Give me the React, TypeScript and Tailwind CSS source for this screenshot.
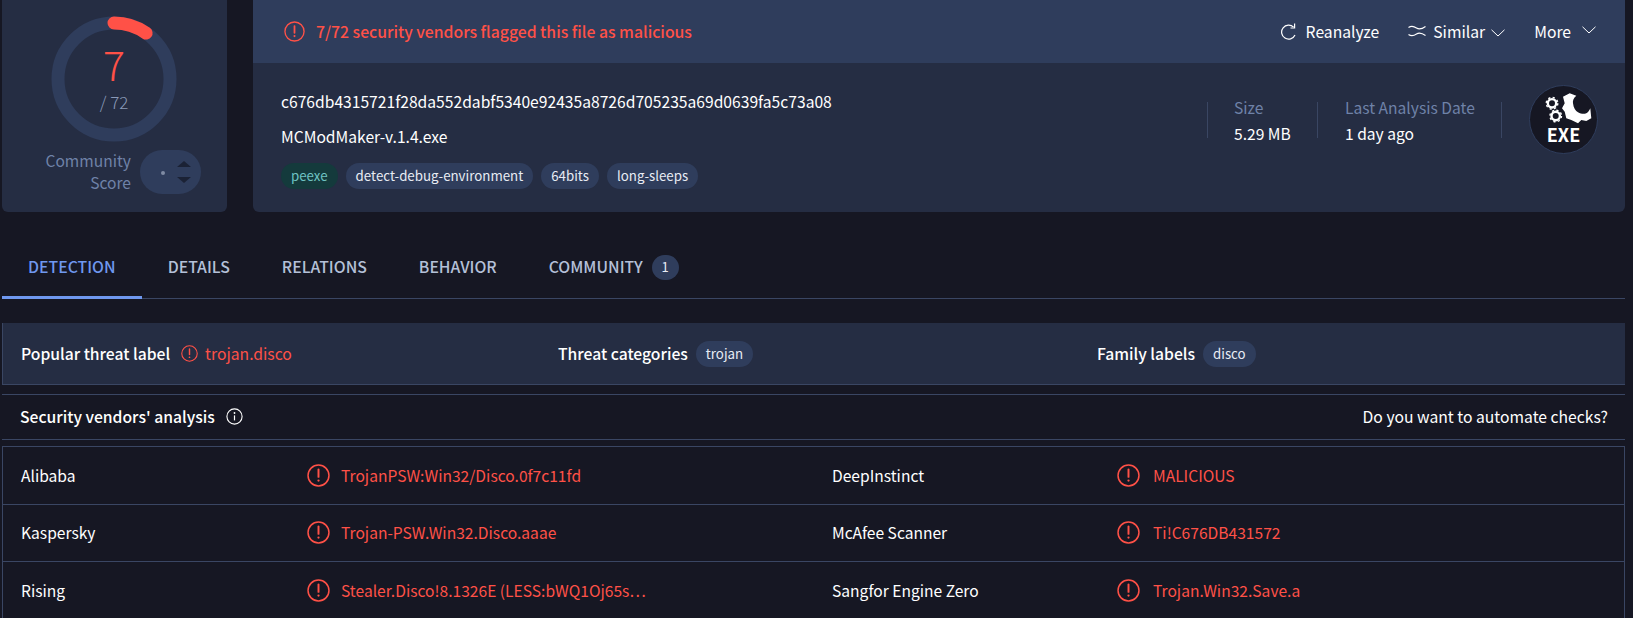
import React from 'react';

const AlertIcon = ({ size = 20, className = '' }: { size?: number; className?: string }) => (
  <svg width={size} height={size} viewBox="0 0 20 20" fill="none" className={`shrink-0 ${className}`}>
    <circle cx="10" cy="10" r="9.1" stroke="#ff5147" strokeWidth="1.3" />
    <path d="M10 4.8v6.4" stroke="#ff5147" strokeWidth="1.7" strokeLinecap="round" />
    <circle cx="10" cy="14.4" r="1" fill="#ff5147" />
  </svg>
);

const InfoIcon = () => (
  <svg width="17" height="17" viewBox="0 0 17 17" fill="none">
    <circle cx="8.5" cy="8.5" r="7.6" stroke="#fff" strokeWidth="1.1" />
    <circle cx="8.5" cy="5" r="0.9" fill="#fff" />
    <path d="M8.5 7.4v5" stroke="#fff" strokeWidth="1.2" />
  </svg>
);

const ReloadIcon = () => (
  <svg width="16" height="17" viewBox="0 0 16 17" fill="none" stroke="#fff" strokeWidth="1.2">
    <path d="M12.6 4.200A7 7 0 1 0 14 12" />
    <path d="M13.600 0.500V5H9.500" />
  </svg>
);

const WaveIcon = () => (
  <svg width="18" height="12" viewBox="0 0 18 12" fill="none" stroke="#fff" strokeWidth="1.1" className="shrink-0">
    <path d="M0.500 2.500C3 0.800 6 1.300 8.500 3C11 4.700 14 4 17.500 1.500" />
    <path d="M0.500 9.500C3 11.200 6 10.700 8.500 9C11 7.300 14 8 17.500 10.500" />
  </svg>
);

const Chevron = ({ className = '' }: { className?: string }) => (
  <svg width="14" height="8" viewBox="0 0 14 8" fill="none" stroke="#fff" strokeWidth="1" className={`shrink-0 ${className}`}>
    <path d="M0.500 0.800L7 7L13.500 0.800" />
  </svg>
);

const ScoreRing = () => (
  <svg width="126" height="126" viewBox="0 0 126 126" fill="none" className="absolute inset-0">
    <circle cx="63" cy="63" r="56" stroke="#2f3d5c" strokeWidth="13" />
    <path d="M 63 7 A 56 56 0 0 1 95.100 17.100" stroke="#ff5147" strokeWidth="13" strokeLinecap="round" />
  </svg>
);

const SmallGear = ({ cx, cy }: { cx: number; cy: number }) => (
  <>
    <circle cx={cx} cy={cy} r="4.200" stroke="#fff" strokeWidth="2.400" />
    <circle cx={cx} cy={cy} r="5.800" stroke="#fff" strokeWidth="1.400" strokeDasharray="2.200 2.350" />
  </>
);

const ExeBadge = () => (
  <div className="flex flex-col items-center w-[69px] h-[69px] rounded-full bg-[#161723] border border-[#2f3d5c] ml-[27px]">
    <svg width="67" height="39" viewBox="1 1 67 39" fill="none" className="shrink-0">
      <SmallGear cx={23} cy={18.3} />
      <SmallGear cx={26.7} cy={31} />
      <path
        d="M34 11.700L40.700 8.300L47.300 10.700C44.500 13 43.500 16 44 18.300C44.500 23 46.500 26 49 27.300C52 29 55 29.300 57.300 28.300C59 27.500 60.500 25.500 61.300 23.300L62.300 33.300L57.300 36L52.300 35L49 38.300L42.300 35L37.300 33.300L35.700 26.700L33 23.300L35.700 18.300Z"
        fill="#fff"
      />
    </svg>
    <span className="text-[18px] leading-[18px] font-bold text-white">EXE</span>
  </div>
);

const Tag = ({ children, green }: { children: React.ReactNode; green?: boolean }) => (
  <span
    className={`inline-flex items-center h-[26px] px-[10px] rounded-full text-[13.3px] leading-none ${
      green ? 'bg-[#143a3c] text-[#6fc3c3]' : 'bg-[#2f3d5c] text-[#e8ecf4]'
    }`}
  >
    {children}
  </span>
);

const Stat = ({ label, value, className }: { label: string; value: string; className: string }) => (
  <div className={`flex flex-col gap-[4px] h-[36px] border-l border-[#3a4663] ${className}`}>
    <span className="text-[15.6px] leading-[20px] -mt-[5px] text-[#6f82a8]">{label}</span>
    <span className="text-[15.6px] leading-[24px] text-white">{value}</span>
  </div>
);

const tabs = [
  { name: 'DETECTION', active: true },
  { name: 'DETAILS' },
  { name: 'RELATIONS' },
  { name: 'BEHAVIOR' },
  { name: 'COMMUNITY', badge: '1' },
];

const rows = [
  ['Alibaba', 'TrojanPSW:Win32/Disco.0f7c11fd', 'DeepInstinct', 'MALICIOUS'],
  ['Kaspersky', 'Trojan-PSW.Win32.Disco.aaae', 'McAfee Scanner', 'Ti!C676DB431572'],
  ['Rising', 'Stealer.Disco!8.1326E (LESS:bWQ1Oj65s…', 'Sangfor Engine Zero', 'Trojan.Win32.Save.a'],
];

const Verdict = ({ name, result, nameWidth, gap }: { name: string; result: string; nameWidth: string; gap: string }) => (
  <div className="flex items-center">
    <span className={`${nameWidth} text-[15.6px] text-white`}>{name}</span>
    <AlertIcon size={23} />
    <span className={`${gap} text-[15.6px] text-[#ff5147] whitespace-nowrap`}>{result}</span>
  </div>
);

export default function App() {
  return (
    <div className="w-[1633px] h-[618px] overflow-hidden bg-[#161723] pl-[2px] pr-[8px] font-['Noto_Sans_CJK_JP','Noto_Sans',sans-serif]">
      <div className="flex gap-[26px] h-[212px]">
        <div className="w-[225px] shrink-0 rounded-b-[6px] bg-[#252d43] flex flex-col items-center">
          <div className="relative w-[126px] h-[126px] mt-[16px] -ml-[1px] flex flex-col items-center">
            <ScoreRing />
            <span className="relative mt-[23px] text-[41px] leading-[48px] font-light text-[#ff5147]">7</span>
            <span className="relative mt-[5px] text-[17px] leading-[20px] font-light text-[#8a9ab8]">/ 72</span>
          </div>
          <div className="flex items-center mt-[8px] self-start">
            <div className="w-[129px] -mt-[2px] text-right text-[15.6px] leading-[22px] text-[#6f82a8]">
              Community
              <br />
              Score
            </div>
            <div className="relative ml-[9px] w-[61px] h-[44px] rounded-full bg-[#2f3d5c]">
              <span className="absolute left-[21px] top-[21px] w-[4px] h-[4px] rounded-full bg-[#7f8ba3]" />
              <span className="absolute left-[37px] top-[11px] w-0 h-0 border-x-[7px] border-x-transparent border-b-[6px] border-b-[#1b2235]" />
              <span className="absolute left-[37px] top-[27px] w-0 h-0 border-x-[7px] border-x-transparent border-t-[6px] border-t-[#1b2235]" />
            </div>
          </div>
        </div>

        <div className="flex-1 rounded-b-[6px] bg-[#252d43] overflow-hidden">
          <div className="h-[63px] bg-[#2f3d5c] flex items-center pl-[31px] pr-[29px]">
            <AlertIcon size={21} />
            <span className="ml-[11px] text-[15.75px] font-medium text-[#ff5147]">
              7/72 security vendors flagged this file as malicious
            </span>
            <div className="ml-auto flex items-center text-[15.7px] text-white">
              <ReloadIcon />
              <span className="ml-[9px]">Reanalyze</span>
              <span className="ml-[29px]"><WaveIcon /></span>
              <span className="ml-[7px]">Similar</span>
              <Chevron className="ml-[6px] mt-[4px]" />
              <span className="ml-[29px]">More</span>
              <Chevron className="ml-[11px] -mt-[3px]" />
            </div>
          </div>
          <div className="flex pl-[28px] pr-[27px]">
            <div className="flex flex-col">
              <span className="mt-[27px] text-[15.65px] leading-[24px] text-white">
                c676db4315721f28da552dabf5340e92435a8726d705235a69d0639fa5c73a08
              </span>
              <span className="mt-[11px] text-[15.65px] leading-[24px] text-white">MCModMaker-v.1.4.exe</span>
              <div className="flex gap-[8px] mt-[14px]">
                <Tag green>peexe</Tag>
                <Tag>detect-debug-environment</Tag>
                <Tag>64bits</Tag>
                <Tag>long-sleeps</Tag>
              </div>
            </div>
            <div className="ml-auto flex items-start">
              <Stat label="Size" value="5.29 MB" className="w-[110px] pl-[26px] mt-[39px]" />
              <Stat label="Last Analysis Date" value="1 day ago" className="w-[184px] pl-[27px] mt-[39px]" />
              <div className="w-px h-[36px] bg-[#3a4663] mt-[39px]" />
              <div className="mt-[22px]"><ExeBadge /></div>
            </div>
          </div>
        </div>
      </div>

      <div className="flex mt-[33px] h-[54px] border-b border-[#3a4663]">
        {tabs.map((tab) => (
          <div
            key={tab.name}
            className={`flex items-center h-[54px] px-[26px] pb-[7px] text-[15.8px] font-medium border-b-[3px] ${
              tab.active ? 'text-[#6f98ef] border-[#6f98ef]' : 'text-[#b4c0d8] border-transparent'
            }`}
          >
            {tab.name}
            {tab.badge && (
              <span className="ml-[9px] w-[27px] h-[25px] rounded-full bg-[#2f3d5c] flex items-center justify-center text-[13px] font-normal text-[#e8ecf4]">
                {tab.badge}
              </span>
            )}
          </div>
        ))}
      </div>

      <div className="grid grid-cols-[537px_539px_1fr] items-center mt-[24px] h-[62px] pl-[18px] pt-[1px] bg-[#252d43] border-l border-b border-[#3a4663] text-[15.7px] text-white">
        <div className="flex items-center">
          <span className="font-medium">Popular threat label</span>
          <span className="ml-[11px]"><AlertIcon size={17} /></span>
          <span className="ml-[7px] text-[#ff5147]">trojan.disco</span>
        </div>
        <div className="flex items-center">
          <span className="font-medium">Threat categories</span>
          <span className="ml-[8px]"><Tag>trojan</Tag></span>
        </div>
        <div className="flex items-center">
          <span className="font-medium">Family labels</span>
          <span className="ml-[8px]"><Tag>disco</Tag></span>
        </div>
      </div>

      <div className="flex items-center justify-between mt-[9px] h-[46px] pl-[18px] pr-[17px] border-y border-[#3a4663] text-[15.7px] text-white">
        <div className="flex items-center gap-[11px]">
          <span className="font-medium">Security vendors' analysis</span>
          <InfoIcon />
        </div>
        <span>Do you want to automate checks?</span>
      </div>

      <div className="mt-[6px] border-t border-x border-[#3a4663]">
        {rows.map((row) => (
          <div key={row[0]} className="grid grid-cols-[811px_1fr] items-center h-[57.500px] pl-[18px] border-b border-[#3a4663]">
            <Verdict name={row[0]} result={row[1]} nameWidth="w-[286px]" gap="ml-[11px]" />
            <Verdict name={row[2]} result={row[3]} nameWidth="w-[285px]" gap="ml-[13px]" />
          </div>
        ))}
      </div>
    </div>
  );
}
